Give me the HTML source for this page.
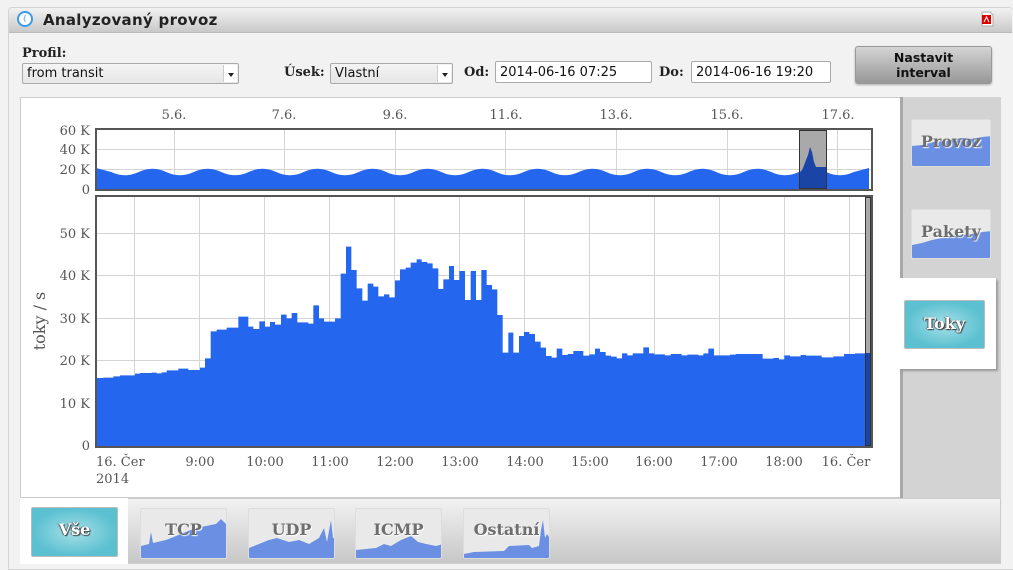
<!DOCTYPE html>
<html><head><meta charset="utf-8"><style>
*{margin:0;padding:0;box-sizing:border-box}
body{width:1013px;height:570px;background:#f2f2f2;position:relative;overflow:hidden;font-family:"DejaVu Sans","Liberation Sans",sans-serif}
.abs{position:absolute}
.panel{left:8px;top:7px;width:1005px;height:563px;border:1px solid #d4d4d4;border-right:none;border-radius:4px 4px 0 0;background:#f2f2f2}
.hdr{left:9px;top:8px;width:1003px;height:25px;background:linear-gradient(#f2f2f2,#c9c9c9);border-radius:4px 4px 0 0;border-bottom:1px solid #bbb}
.ttl{left:43px;top:11px;font-weight:bold;font-size:15px;color:#222;letter-spacing:0.3px}
.lbl{font-family:"DejaVu Serif","Liberation Serif",serif;font-weight:bold;font-size:13px;color:#222}
.sel{background:linear-gradient(#f4f4f4,#e6e6e6);border:1px solid #aaa;border-radius:2px;font-size:13px;color:#111;padding:2px 4px 0;height:21px}
.sel .ar{position:absolute;right:1px;top:1px;width:14px;height:17px;background:#fff;border-left:1px solid #ccc}
.sel .ar:after{content:"";position:absolute;left:4px;top:8px;border:3px solid transparent;border-top:4px solid #222}
.inp{background:#fff;border:1px solid #aaa;border-radius:2px;font-size:13px;color:#111;padding:3px 4px 0;height:22px}
.btn{left:855px;top:46px;width:137px;height:38px;background:linear-gradient(#d4d4d4,#979797);border:1px solid #999;border-radius:3px;font-weight:bold;font-size:12.5px;text-align:center;line-height:15px;padding-top:3px;color:#111;box-shadow:0 1px 2px rgba(0,0,0,.3)}
.thumb{background:#e9e9e9;border:1px solid #ddd;border-radius:2px;overflow:hidden}
.thumb svg{position:absolute;left:0;bottom:0}
.tt{position:absolute;width:100%;text-align:center;font-family:"DejaVu Serif","Liberation Serif",serif;font-weight:bold;font-size:16px;color:#6e6e6e;text-shadow:1px 1px 1px #fff}
.act{background:radial-gradient(ellipse at center,#a6e0e8,#5bc0d0 70%);border:1px solid #bbb;border-radius:2px}
.act .tt{color:#fff;text-shadow:1px 1px 1px #333,-1px 0 1px #555}
</style></head><body>
<div class="abs panel"></div>
<div class="abs hdr"></div>
<svg class="abs" style="left:16px;top:10px" width="18" height="18"><circle cx="9" cy="9" r="8" fill="#3d9be6"/><circle cx="9" cy="9" r="6" fill="#fff"/><path d="M9.5 5 L8 9 L9.5 12" stroke="#6aaee8" fill="none" stroke-width="1"/></svg>
<div class="abs ttl">Analyzovaný provoz</div>
<svg class="abs" style="left:980px;top:11px" width="14" height="16"><path d="M2 1 H10 L13 4 V15 H2Z" fill="#fff" stroke="#aaa"/><rect x="2" y="4" width="9" height="9" fill="#d00"/><path d="M4 11 L6.5 6 L9 11" stroke="#fff" fill="none"/></svg>

<div class="abs lbl" style="left:22px;top:46px">Profil:</div>
<div class="abs sel" style="left:22px;top:63px;width:217px">from transit<span class="ar"></span></div>
<div class="abs lbl" style="left:284px;top:65px">Úsek:</div>
<div class="abs sel" style="left:330px;top:63px;width:123px">Vlastní<span class="ar"></span></div>
<div class="abs lbl" style="left:464px;top:65px">Od:</div>
<div class="abs inp" style="left:495px;top:61px;width:157px">2014-06-16 07:25</div>
<div class="abs lbl" style="left:659px;top:65px">Do:</div>
<div class="abs inp" style="left:691px;top:61px;width:140px">2014-06-16 19:20</div>
<div class="abs btn">Nastavit<br>interval</div>

<div class="abs" style="left:900px;top:97px;width:101px;height:402px;background:#d3d3d3;border-left:3px solid #a8a8a8"></div>
<div class="abs thumb" style="left:911px;top:119px;width:80px;height:48px"><svg width="80" height="30"><path d="M0 10 L10 9 L20 6 L30 5 L40 4 L50 2 L60 3 L70 1 L80 0 V30 H0Z" fill="#6a8fe3"/></svg><div class="tt" style="top:12px">Provoz</div></div>
<div class="abs thumb" style="left:911px;top:209px;width:80px;height:50px"><svg width="80" height="35"><path d="M0 22 L10 20 L20 17 L30 15 L40 14 L50 12 L60 11 L70 9 L80 8 V35 H0Z" fill="#6a8fe3"/></svg><div class="tt" style="top:12px">Pakety</div></div>
<div class="abs" style="left:898px;top:278px;width:98px;height:91px;background:#fff;box-shadow:2px 2px 2px #999"></div>
<div class="abs act" style="left:904px;top:300px;width:81px;height:49px"><div class="tt" style="top:13px">Toky</div></div>

<div class="abs" style="left:20px;top:498px;width:981px;height:66px;background:linear-gradient(#f2f2f2,#c7c7c7);border:1px solid #ccc"></div>
<div class="abs" style="left:20px;top:497px;width:108px;height:67px;background:#fff"></div>
<div class="abs act" style="left:31px;top:507px;width:87px;height:50px"><div class="tt" style="top:12px">Vše</div></div>
<div class="abs thumb" style="left:140px;top:508px;width:87px;height:51px"><svg width="87" height="40"><path d="M0 28 L8 26 L10 14 L12 25 L25 22 L35 18 L45 14 L55 10 L65 8 L75 6 L80 1 L87 8 V40 H0Z" fill="#6a8fe3"/></svg><div class="tt" style="top:11px">TCP</div></div>
<div class="abs thumb" style="left:248px;top:508px;width:87px;height:51px"><svg width="87" height="40"><path d="M0 30 L10 26 L20 22 L28 20 L40 24 L50 22 L60 26 L70 20 L75 10 L78 24 L82 2 L84 20 L87 20 V40 H0Z" fill="#6a8fe3"/></svg><div class="tt" style="top:11px">UDP</div></div>
<div class="abs thumb" style="left:355px;top:508px;width:87px;height:51px"><svg width="87" height="40"><path d="M0 32 L20 30 L28 26 L35 28 L45 22 L55 18 L62 24 L70 26 L80 28 L87 26 V40 H0Z" fill="#6a8fe3"/></svg><div class="tt" style="top:11px">ICMP</div></div>
<div class="abs thumb" style="left:463px;top:508px;width:87px;height:51px"><svg width="87" height="40"><path d="M0 36 L10 34 L40 33 L45 28 L65 27 L68 30 L75 28 L77 12 L79 2 L81 20 L83 16 L87 22 V40 H0Z" fill="#6a8fe3"/></svg><div class="tt" style="top:11px">Ostatní</div></div>

<div class="abs" style="left:20px;top:97px;width:880px;height:401px;background:#fff;border:1px solid #ccc;border-right:none"></div>
<svg class="abs" style="left:0;top:0" width="1013" height="570" font-family="DejaVu Serif, Liberation Serif, serif" font-size="13" fill="#555">
<g stroke="#d4d4d4" stroke-width="1">
<line x1="96" y1="149.5" x2="871" y2="149.5"/><line x1="96" y1="169.5" x2="871" y2="169.5"/>
<line x1="174.5" y1="129" x2="174.5" y2="189"/><line x1="284.5" y1="129" x2="284.5" y2="189"/><line x1="395.5" y1="129" x2="395.5" y2="189"/><line x1="505.5" y1="129" x2="505.5" y2="189"/><line x1="616.5" y1="129" x2="616.5" y2="189"/><line x1="727.5" y1="129" x2="727.5" y2="189"/><line x1="837.5" y1="129" x2="837.5" y2="189"/>
<line x1="96" y1="233.5" x2="871" y2="233.5"/><line x1="96" y1="275.5" x2="871" y2="275.5"/><line x1="96" y1="318.5" x2="871" y2="318.5"/><line x1="96" y1="360.5" x2="871" y2="360.5"/><line x1="96" y1="403.5" x2="871" y2="403.5"/>
<line x1="134.5" y1="197" x2="134.5" y2="446"/><line x1="199.5" y1="197" x2="199.5" y2="446"/><line x1="264.5" y1="197" x2="264.5" y2="446"/><line x1="329.5" y1="197" x2="329.5" y2="446"/><line x1="394.5" y1="197" x2="394.5" y2="446"/><line x1="459.5" y1="197" x2="459.5" y2="446"/><line x1="524.5" y1="197" x2="524.5" y2="446"/><line x1="589.5" y1="197" x2="589.5" y2="446"/><line x1="654.5" y1="197" x2="654.5" y2="446"/><line x1="719.5" y1="197" x2="719.5" y2="446"/><line x1="784.5" y1="197" x2="784.5" y2="446"/><line x1="849.5" y1="197" x2="849.5" y2="446"/>
</g>
<rect x="799" y="130" width="28" height="59" fill="#a9a9a9"/>
<path d="M96,189 V168 L111.25,172 Q125,178.5 138.75,172 T166.25,172 T193.75,172 T221.25,172 T248.75,172 T276.25,172 T303.75,172 T331.25,172 T358.75,172 T386.25,172 T413.75,172 T441.25,172 T468.75,172 T496.25,172 T523.75,172 T551.25,172 T578.75,172 T606.25,172 T633.75,172 T661.25,172 T688.75,172 T716.25,172 T743.75,172 T771.25,172 T798.75,172 T826.25,172 T853.75,172 L869,168 V189 Z" fill="#2566ef"/>
<path d="M799,189 V175 L803,168 L806,160 L808,155 L810,147 L812,152 L814,162 L816,167 L827,167 V189Z" fill="#1a45a6"/>
<rect x="799.5" y="130.5" width="27" height="58" fill="none" stroke="#333"/>
<rect x="96" y="129" width="776" height="61" fill="none" stroke="#555" stroke-width="2"/>
<g transform="translate(20,100) scale(0.33333)">
<path fill="#2566ef" d="M230,1038 V838 H250 V833 H280 V829 H300 V826 H345 V821 H360 V819 H395 V818 H410 V820 H425 V817 H440 V811 H475 V806 H505 V810 H540 V803 H555 V775 H572 V694 H590 V689 H620 V683 H655 V650 H685 V680 H700 V687 H718 V664 H735 V680 H750 V666 H765 V674 H783 V644 H800 V655 H815 V639 H832 V667 H865 V671 H880 V616 H897 V655 H912 V665 H945 V655 H962 V521 H978 V440 H994 V510 H1010 V565 H1027 V602 H1043 V551 H1060 V560 H1075 V589 H1092 V583 H1108 V592 H1125 V541 H1140 V508 H1157 V503 H1172 V488 H1190 V478 H1205 V486 H1222 V490 H1238 V505 H1255 V567 H1270 V538 H1287 V498 H1302 V540 H1318 V513 H1335 V600 H1352 V513 H1368 V600 H1384 V510 H1400 V555 H1416 V568 H1432 V645 H1448 V758 H1465 V698 H1480 V758 H1497 V708 H1512 V696 H1528 V702 H1545 V725 H1562 V743 H1578 V768 H1595 V773 H1610 V746 H1627 V765 H1643 V762 H1660 V753 H1690 V767 H1708 V763 H1725 V746 H1740 V756 H1757 V767 H1773 V770 H1790 V775 H1806 V760 H1822 V766 H1838 V760 H1870 V742 H1887 V760 H1903 V763 H1935 V766 H1952 V762 H1985 V766 H2002 V764 H2035 V766 H2050 V760 H2065 V746 H2082 V766 H2130 V764 H2147 V762 H2228 V776 H2260 V774 H2277 V778 H2293 V766 H2310 V769 H2342 V765 H2358 V767 H2405 V772 H2440 V769 H2472 V762 H2505 V760 H2555 V1038 Z"/>
</g>
<path d="M96,446 V378 H840 V446Z" fill="#2566ef"/>
<rect x="865" y="197" width="6" height="156" fill="#a9a9a9"/>
<rect x="865" y="353" width="6" height="92" fill="#1a45a6"/>
<rect x="865.5" y="197.5" width="5" height="248" fill="none" stroke="#333"/>
<rect x="96" y="196" width="776" height="251" fill="none" stroke="#555" stroke-width="2"/>
<g text-anchor="middle">
<text x="174" y="119">5.6.</text><text x="284" y="119">7.6.</text><text x="395" y="119">9.6.</text><text x="506" y="119">11.6.</text><text x="616" y="119">13.6.</text><text x="727" y="119">15.6.</text><text x="838" y="119">17.6.</text>
<text x="200" y="466">9:00</text><text x="265" y="466">10:00</text><text x="330" y="466">11:00</text><text x="395" y="466">12:00</text><text x="460" y="466">13:00</text><text x="525" y="466">14:00</text><text x="590" y="466">15:00</text><text x="654" y="466">16:00</text><text x="719" y="466">17:00</text><text x="784" y="466">18:00</text><text x="846" y="466">16. Čer</text>
</g>
<text x="96" y="466">16. Čer</text><text x="96" y="483">2014</text>
<g text-anchor="end">
<text x="90" y="135">60 K</text><text x="90" y="154">40 K</text><text x="90" y="174">20 K</text><text x="90" y="194">0</text>
<text x="90" y="238">50 K</text><text x="90" y="280">40 K</text><text x="90" y="323">30 K</text><text x="90" y="365">20 K</text><text x="90" y="408">10 K</text><text x="90" y="450">0</text>
</g>
<text x="45" y="321" font-size="16" text-anchor="middle" transform="rotate(-90 45 321)">toky / s</text>
</svg>
</body></html>
